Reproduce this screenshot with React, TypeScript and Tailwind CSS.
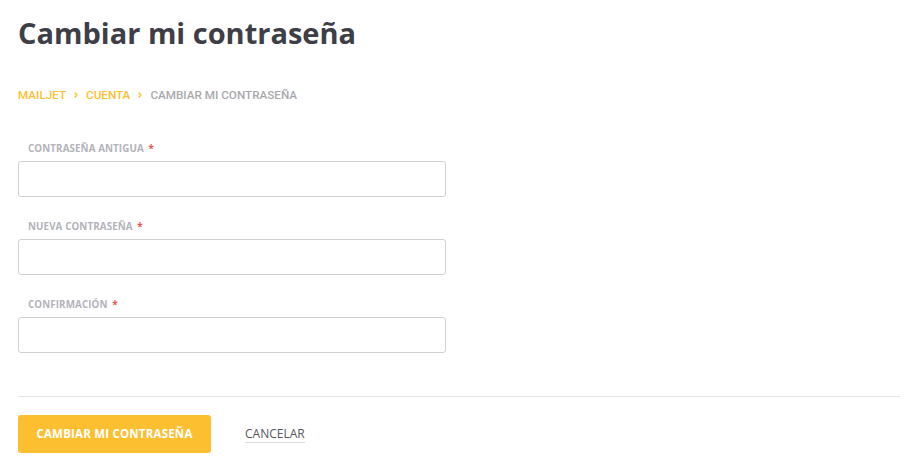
import { ChevronRight } from 'lucide-react';

const fields = ['CONTRASEÑA ANTIGUA', 'NUEVA CONTRASEÑA', 'CONFIRMACIÓN'];

export default function App() {
  return (
    <div className="min-h-[475px] w-[910px] bg-white pl-[18px] pr-[10px] pt-[12px] font-['Open_Sans',sans-serif]">
      <h1 className="text-[29px] font-bold leading-[42px] text-[#3e3f46]">Cambiar mi contraseña</h1>

      {/* Breadcrumb */}
      <nav className="mt-[33px] flex items-center font-['Roboto',sans-serif] text-[11.7px] font-medium leading-[16px]">
        <span className="text-[#fbbf2f]">MAILJET</span>
        <ChevronRight className="mx-[6px] h-[8px] w-[8px] text-[#fbbf2f]" strokeWidth={4} />
        <span className="text-[#fbbf2f]">CUENTA</span>
        <ChevronRight className="mx-[6px] h-[8px] w-[8px] text-[#fbbf2f]" strokeWidth={4} />
        <span className="text-[#a9a9ad]">CAMBIAR MI CONTRASEÑA</span>
      </nav>

      {/* Form */}
      <div className="mt-[39px] flex w-[428px] flex-col gap-[23px]">
        {fields.map((label) => (
          <div key={label} className="flex flex-col">
            <label className="pl-[10px] text-[9.8px] font-bold leading-[14px] tracking-[0.1px] text-[#b3b3ba]">
              {label} <span className="ml-[2px] text-[#e5574f]">*</span>
            </label>
            <input
              type="password"
              className="mt-[5px] h-[36px] w-full rounded-[3px] border border-[#cfcfd4] bg-white px-3 outline-none"
            />
          </div>
        ))}
      </div>

      <div className="mt-[43px] h-px w-[882px] bg-[#e3e3e8]" />

      <div className="mt-[18px] flex items-center gap-[34px]">
        <button className="h-[38px] w-[193px] rounded-[3px] bg-[#fbbf2f] text-[11.5px] font-bold tracking-[0.2px] text-white">
          CAMBIAR MI CONTRASEÑA
        </button>
        <button className="border-b border-[#dcdce0] pb-[1px] text-[12px] leading-[15px] text-[#55565c]">
          CANCELAR
        </button>
      </div>
    </div>
  );
}
